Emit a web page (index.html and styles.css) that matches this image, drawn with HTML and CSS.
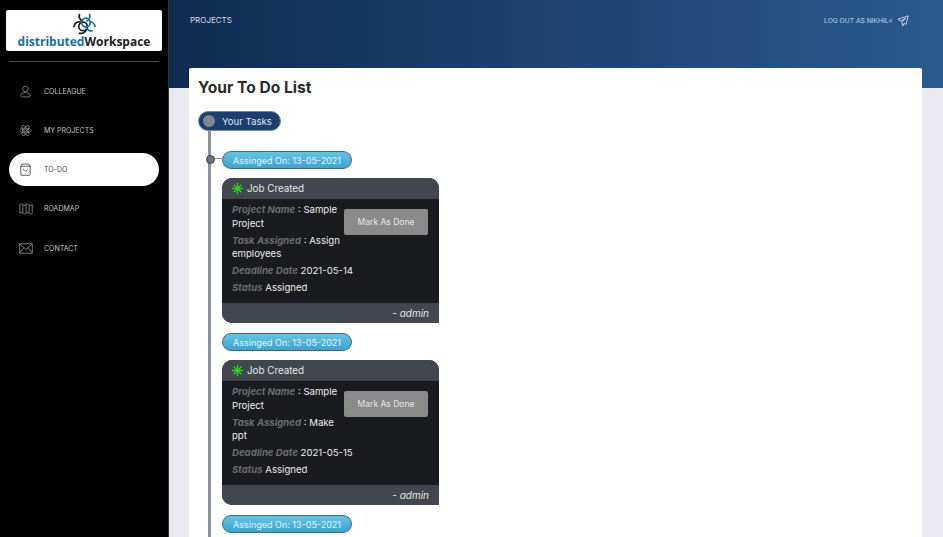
FILE: index.html
```html
<!DOCTYPE html>
<html lang="en">
<head>
<meta charset="utf-8">
<title>Your To Do List</title>
<link rel="stylesheet" href="styles.css">
</head>
<body>
<div class="app">
  <aside class="sidebar">
    <div class="logo">
      <svg class="logo-mark" viewBox="0 0 24 24" width="25" height="23" fill="none" stroke-width="1.800">
        <g stroke="#1a1a1a"><circle cx="10.500" cy="15" r="4.500"/><path d="M7 2c-1.500 3 0 6 3.500 8M1 16c0-4 3-6 7-6M6 22c3 1 7 0 8-4"/></g>
        <g stroke="#1b6f9e"><circle cx="13.500" cy="11" r="4.500"/><path d="M17 2c1.500 3 0 6-3 8M23 16c0-4-3-6-6-6M13.500 15.500c1 3 4 5 7 4"/></g>
      </svg>
      <div class="logo-text"><span class="logo-blue">distributed</span>Workspace</div>
    </div>
    <div class="rule"></div>
    <nav class="nav">
      <a class="nav-item">
        <svg class="nav-icon" viewBox="0 0 18 18" fill="none" stroke="#9a9a9a"><circle cx="9" cy="5.500" r="3.800"/><path d="M9 10.500c-4 0-6.500 1.500-6.500 4 0 1.300 1 2 2 2h9c1 0 2-.7 2-2 0-2.500-2.500-4-6.500-4z"/></svg>
        <span>COLLEAGUE</span>
      </a>
      <a class="nav-item">
        <svg class="nav-icon" viewBox="0 0 18 18" fill="none" stroke="#9a9a9a"><ellipse cx="9" cy="9" rx="8" ry="3.200"/><ellipse cx="9" cy="9" rx="8" ry="3.200" transform="rotate(60 9 9)"/><ellipse cx="9" cy="9" rx="8" ry="3.200" transform="rotate(120 9 9)"/><circle cx="9" cy="9" r="1.500"/></svg>
        <span>MY PROJECTS</span>
      </a>
      <a class="nav-item active">
        <svg class="nav-icon" viewBox="0 0 18 18" fill="none" stroke="#222"><path d="M4 1.500h10l1.500 3v11a1.500 1.500 0 0 1-1.500 1.500H4a1.500 1.500 0 0 1-1.500-1.500v-11z"/><path d="M2.500 4.500h13M6 8c.5 2 1.500 3 3 3s2.500-1 3-3"/></svg>
        <span>TO-DO</span>
      </a>
      <a class="nav-item">
        <svg class="nav-icon wide" viewBox="0 0 18 18" fill="none" stroke="#9a9a9a"><path d="M1 4c1.500-1.500 3-1.500 4 0s2.500 1.500 4 0 3-1.500 4 0 2.500 1.500 4 0v11c-1.500 1.500-3 1.500-4 0s-2.500-1.500-4 0-3 1.500-4 0-2.500-1.500-4 0zM5 4v11M9 4v11M13 4v11"/></svg>
        <span>ROADMAP</span>
      </a>
      <a class="nav-item">
        <svg class="nav-icon wide" viewBox="0 0 18 18" fill="none" stroke="#9a9a9a"><rect x="1" y="3" width="16" height="12"/><path d="M1 3.500l8 6.500 8-6.500M1 14.500l5.500-6.500M17 14.500l-5.500-6.500"/></svg>
        <span>CONTACT</span>
      </a>
    </nav>
  </aside>
  <main class="main">
    <header class="topbar">
      <span class="crumb">PROJECTS</span>
      <a class="logout">LOG OUT AS NIKHIL&lt;
        <svg class="send" viewBox="0 0 14 14" fill="none" stroke="#dfe6ef" stroke-width="1"><path d="M13 1L1 5l3.500 2.200L10.500 3.500 5.800 8l.7 5 1.800-3.200 2.200 1.200z"/></svg>
      </a>
    </header>
    <section class="panel">
      <h1 class="title">Your To Do List</h1>
      <div class="timeline">
        <div class="tasks-pill"><i class="tasks-dot"></i>Your Tasks</div>
        <div class="entries">
          <article class="entry">
            <div class="date-pill first">Assinged On: 13-05-2021</div>
            <div class="job">
              <div class="job-head">
                <svg class="star" viewBox="0 0 12 12" stroke="#27d61f" stroke-width="1.500"><path d="M6 0v12M0 6h12M1.800 1.800l8.400 8.400M10.200 1.800l-8.400 8.400"/></svg>
                Job Created
              </div>
              <div class="job-body">
                <div class="job-info">
                  <p><b>Project Name</b> : Sample Project</p>
                  <p><b>Task Assigned</b> : Assign employees</p>
                  <p class="single"><b>Deadline Date</b> 2021-05-14</p>
                  <p class="single"><b>Status</b> Assigned</p>
                </div>
                <button class="done">Mark As Done</button>
              </div>
              <div class="job-foot">- admin</div>
            </div>
          </article>
          <article class="entry">
            <div class="date-pill">Assinged On: 13-05-2021</div>
            <div class="job">
              <div class="job-head">
                <svg class="star" viewBox="0 0 12 12" stroke="#27d61f" stroke-width="1.500"><path d="M6 0v12M0 6h12M1.800 1.800l8.400 8.400M10.200 1.800l-8.400 8.400"/></svg>
                Job Created
              </div>
              <div class="job-body">
                <div class="job-info">
                  <p><b>Project Name</b> : Sample Project</p>
                  <p><b>Task Assigned</b> : Make ppt</p>
                  <p class="single"><b>Deadline Date</b> 2021-05-15</p>
                  <p class="single"><b>Status</b> Assigned</p>
                </div>
                <button class="done">Mark As Done</button>
              </div>
              <div class="job-foot">- admin</div>
            </div>
          </article>
          <article class="entry">
            <div class="date-pill">Assinged On: 13-05-2021</div>
          </article>
        </div>
      </div>
    </section>
  </main>
</div>
</body>
</html>
```
FILE: styles.css
```css
* { box-sizing: border-box; }
html, body { margin: 0; height: 100%; overflow: hidden; }
body { font-family: Inter, "Open Sans", sans-serif; background: #e9e9ef; color: #2b2b2b; }
.app { display: flex; height: 537px; }

.sidebar { width: 169px; flex: none; background: #000; padding: 10px 6px 0; border-right: 1px solid #333; }
.logo { height: 41px; width: 156px; background: #fff; border-radius: 2px; display: flex; flex-direction: column; align-items: center; padding-top: 2px; }
.logo-mark { flex: none; margin-bottom: -1px; }
.logo-text { font-family: "Open Sans", sans-serif; font-weight: 700; font-size: 12px; line-height: 15px; color: #222; }
.logo-blue { color: #1b6f9e; }
.rule { height: 1px; background: #4a4a4a; margin: 10px 3px 0; }
.nav { display: flex; flex-direction: column; gap: 6.250px; margin-top: 12.500px; }
.nav-item { height: 33px; width: 150px; margin-left: 3px; border-radius: 17px; padding-left: 10px; display: flex; align-items: center; gap: 11px; font-size: 7px; color: #c4c4c4; }
.nav-item.active { background: #fff; color: #444; }
.nav-icon { width: 13px; height: 15px; margin-right: 1px; flex: none; }
.nav-icon.wide { width: 14px; margin-right: 0; }

.main { flex: 1; min-width: 0; }
.topbar { height: 88px; padding: 15px 34px 0 21px; display: flex; justify-content: space-between; align-items: flex-start; background: linear-gradient(90deg, #0f2b52 0%, #2a5b8f 100%); }
.crumb { font-size: 8px; line-height: 10px; color: #d5dde8; }
.logout { font-size: 6.700px; line-height: 10px; color: #c8d4e4; display: flex; align-items: center; gap: 4px; }
.send { width: 12px; height: 12px; }

.panel { margin: -20px 20px 0; width: 733px; height: 480px; background: #fff; padding: 10px 9px 0; border-radius: 2px 2px 0 0; overflow: hidden; }
.title { margin: 0; font-size: 15.600px; line-height: 20px; font-weight: 700; color: #2b2b2b; }
.timeline { position: relative; margin-top: 13px; }
.timeline::before { content: ""; position: absolute; left: 10px; top: 20px; bottom: -200px; width: 3px; background: #8a919b; }
.tasks-pill { position: relative; height: 20px; width: 83px; border-radius: 10px; background: #1d3f6e; border: 1px solid #7d8794; color: #dfe6ef; font-size: 9.600px; display: flex; align-items: center; padding-left: 4px; gap: 7px; }
.tasks-dot { width: 12px; height: 12px; border-radius: 50%; background: #80868f; flex: none; }
.entries { padding-left: 24px; }
.entry { padding-top: 10px; }
.entry:first-child { padding-top: 20px; }
.date-pill { position: relative; width: 130px; height: 18px; border-radius: 9px; background: linear-gradient(180deg, #66c3e3, #3fa3cf); border: 1px solid #3f6b85; color: #e4f3fa; font-size: 9px; display: flex; align-items: center; justify-content: center; white-space: nowrap; }
.date-pill.first::before { content: ""; position: absolute; left: -13px; top: 6px; width: 13px; height: 1px; background: #8a919b; }
.date-pill.first::after { content: ""; position: absolute; left: -17px; top: 3px; width: 7px; height: 7px; border-radius: 50%; background: #6d737c; border: 1px solid #444; }
.job { width: 217px; margin-top: 9px; border-radius: 10px 10px 0 10px; overflow: hidden; background: #1a1b1e; }
.job-head { height: 21px; background: #42464e; color: #e6e6e6; font-size: 9.800px; display: flex; align-items: center; padding-left: 10px; gap: 4px; }
.star { width: 11px; height: 11px; flex: none; }
.job-body { height: 104px; display: flex; padding: 4px 11px 0 10px; }
.job-info { width: 111px; flex: none; color: #eee; font-size: 9.600px; line-height: 13.500px; }
.job-info p { margin: 0 0 3.500px; }
.job-info p.single { white-space: nowrap; }
.job-info b { font-style: italic; font-weight: 700; color: #6a6c70; }
.done { margin: 6px 0 0 auto; width: 84px; height: 26px; flex: none; border: 0; border-radius: 2px; background: #8a8a8a; color: #e6e6e6; font: inherit; font-size: 8.500px; padding: 0; }
.job-foot { height: 20px; background: #42464e; color: #e6e6e6; font-size: 10px; font-style: italic; text-align: right; padding-right: 10px; line-height: 20px; }
```
